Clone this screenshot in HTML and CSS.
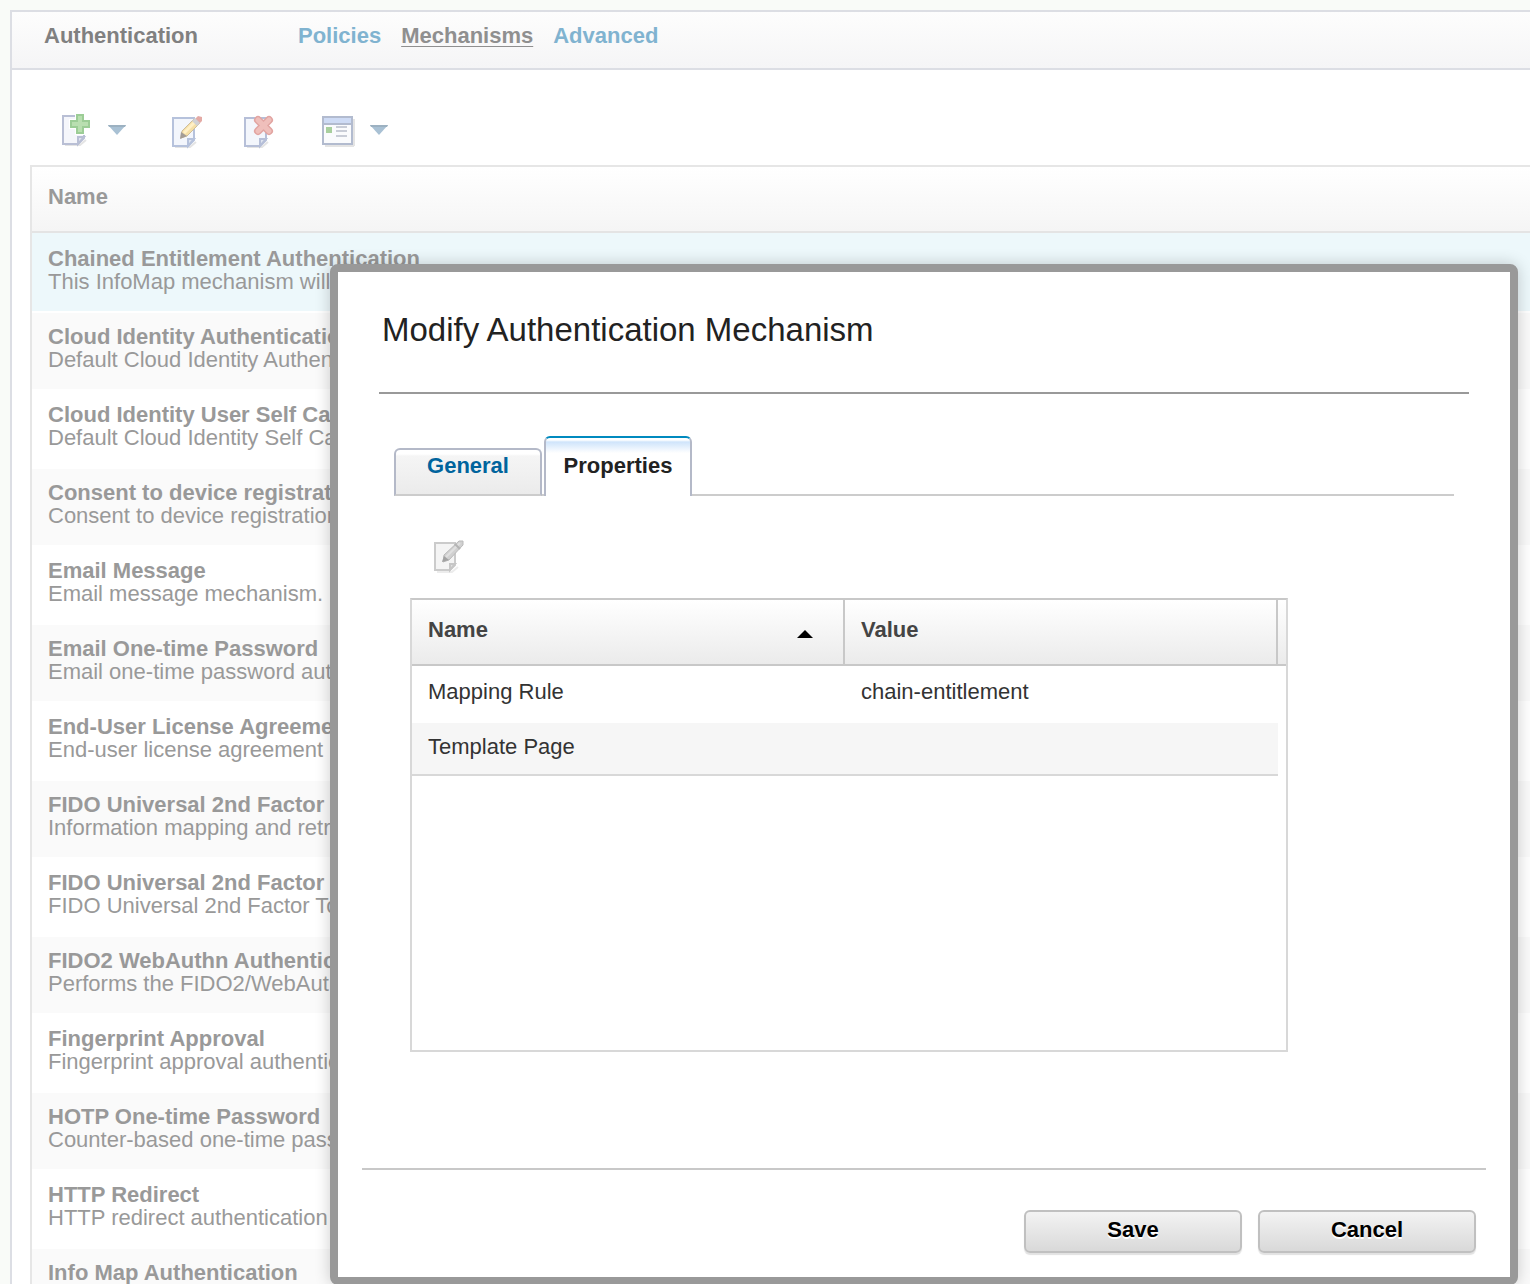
FILE: index.html
```
<!DOCTYPE html>
<html lang="en">
<head>
    <meta charset="UTF-8">
    <meta name="viewport" content="width=device-width, initial-scale=1.0">
    <title>Authentication Mechanisms</title>
    <link rel="stylesheet" href="styles.css">
</head>
<body>
    <main class="panel">
        <header class="panel-header">
            <h1>Authentication</h1>
            <nav>
                <a href="#policies">Policies</a>
                <a href="#mechanisms" class="current">Mechanisms</a>
                <a href="#advanced">Advanced</a>
            </nav>
        </header>

        <div class="toolbar">
            <button type="button" class="tool with-menu" aria-label="Add mechanism">
                <svg class="icon" viewBox="0 2 32 32">
                    <path d="M5 32H20L26 27" fill="none" stroke="#e4e4e4" stroke-width="2"/>
                    <path d="M3 3H24V25L18 31H3Z" fill="#f5f6fb" stroke="#b9bfd5" stroke-width="2"/>
                    <path d="M24 24H18V31Z" fill="#dfe3ee" stroke="#b9bfd5" stroke-width="2"/>
                    <path d="M17 2H23V8H29V14H23V20H17V14H11V8H17Z" fill="#b9dfb0" stroke="#fff" stroke-width="4"/>
                    <path d="M17 2H23V8H29V14H23V20H17V14H11V8H17Z" fill="#b9dfb0" stroke="#9ccd96" stroke-width="2"/>
                </svg>
                <svg class="arrow" viewBox="0 1 18 10"><path d="M0 0H18L9 10Z" fill="#a9c1d4"/><path d="M0 0H18L17 2H1Z" fill="#9cb1c1"/></svg>
            </button>
            <button type="button" class="tool edit" aria-label="Edit mechanism">
                <svg class="icon" viewBox="0 0 32 32">
                    <path d="M5 32H20L26 27" fill="none" stroke="#e4e4e4" stroke-width="2"/>
                    <path d="M3 3H24V25L18 31H3Z" fill="#f3f6fc" stroke="#b6c2dc" stroke-width="2"/>
                    <path d="M24 24H18V31Z" fill="#dfe5f0" stroke="#b6c2dc" stroke-width="2"/>
                    <path d="M11 23L12 16L24 4L30 8L17 21Z" fill="#f5dfa6" stroke="#cdbd9c"/>
                    <path d="M14 18L26 6" stroke="#fff0c6" stroke-width="3"/>
                    <path d="M25 4L28 1L32 2L32 6L29 9Z" fill="#e4aaa5"/>
                    <path d="M22 6L25 3L30 8L27 11Z" fill="#d1d1d4"/>
                    <path d="M10 24L11 17L17 21Z" fill="#a39c96"/>
                </svg>
            </button>
            <button type="button" class="tool delete" aria-label="Delete mechanism">
                <svg class="icon" viewBox="0 0 32 32">
                    <path d="M5 32H20L26 27" fill="none" stroke="#e4e4e4" stroke-width="2"/>
                    <path d="M3 3H24V25L18 31H3Z" fill="#f3f6fc" stroke="#b6bfd8" stroke-width="2"/>
                    <path d="M24 24H18V31Z" fill="#dfe5f0" stroke="#b6bfd8" stroke-width="2"/>
                    <path d="M16 5L27 16M27 5L16 16" stroke="#e2a5a2" stroke-width="8" stroke-linecap="round"/>
                    <path d="M16 5L27 16M27 5L16 16" stroke="#efbfbb" stroke-width="5" stroke-linecap="round"/>
                </svg>
            </button>
            <button type="button" class="tool with-menu" aria-label="View">
                <svg class="icon" viewBox="0 0 32 32">
                    <path d="M3 31H32M32 4V31" stroke="#e4e4e4" stroke-width="2"/>
                    <path d="M1 2H30V29H1Z" fill="#fafbfd" stroke="#b2bbcf" stroke-width="2"/>
                    <path d="M2 3H29V8H2Z" fill="#cedbf5"/>
                    <path d="M1 9H30" stroke="#b2bbcf" stroke-width="2"/>
                    <path d="M4 12H10V18H4Z" fill="#a8cf9e"/>
                    <path d="M14 12H25M14 16H25M14 21H25" stroke="#c9cdd7" stroke-width="2"/>
                </svg>
                <svg class="arrow" viewBox="0 1 18 10"><path d="M0 0H18L9 10Z" fill="#a9c1d4"/><path d="M0 0H18L17 2H1Z" fill="#9cb1c1"/></svg>
            </button>
        </div>

        <table class="mechanisms">
            <thead>
                <tr><th>Name</th></tr>
            </thead>
            <tbody>
                <tr class="selected"><td><strong>Chained Entitlement Authentication</strong><p>This InfoMap mechanism will</p></td></tr>
                <tr><td><strong>Cloud Identity Authentication</strong><p>Default Cloud Identity Authen</p></td></tr>
                <tr><td><strong>Cloud Identity User Self Care</strong><p>Default Cloud Identity Self Ca</p></td></tr>
                <tr><td><strong>Consent to device registration</strong><p>Consent to device registration</p></td></tr>
                <tr><td><strong>Email Message</strong><p>Email message mechanism.</p></td></tr>
                <tr><td><strong>Email One-time Password</strong><p>Email one-time password aut</p></td></tr>
                <tr><td><strong>End-User License Agreement</strong><p>End-user license agreement</p></td></tr>
                <tr><td><strong>FIDO Universal 2nd Factor</strong><p>Information mapping and retr</p></td></tr>
                <tr><td><strong>FIDO Universal 2nd Factor</strong><p>FIDO Universal 2nd Factor To</p></td></tr>
                <tr><td><strong>FIDO2 WebAuthn Authentic</strong><p>Performs the FIDO2/WebAut</p></td></tr>
                <tr><td><strong>Fingerprint Approval</strong><p>Fingerprint approval authentic</p></td></tr>
                <tr><td><strong>HOTP One-time Password</strong><p>Counter-based one-time pass</p></td></tr>
                <tr><td><strong>HTTP Redirect</strong><p>HTTP redirect authentication</p></td></tr>
                <tr><td><strong>Info Map Authentication</strong></td></tr>
            </tbody>
        </table>
    </main>

    <div class="dialog" role="dialog" aria-labelledby="dialog-title">
        <h2 id="dialog-title">Modify Authentication Mechanism</h2>

        <div class="tabs" role="tablist">
            <button type="button" class="tab" role="tab" aria-selected="false">General</button>
            <button type="button" class="tab active" role="tab" aria-selected="true">Properties</button>
        </div>

        <div class="properties" role="tabpanel">
            <button type="button" class="tool" aria-label="Edit property" disabled>
                <svg class="icon" viewBox="0 0 32 32">
                    <path d="M5 32H20L26 27" fill="none" stroke="#ececec" stroke-width="2"/>
                    <path d="M3 3H23V25L18 30H3Z" fill="#f4f4f4" stroke="#cbcbcb" stroke-width="2"/>
                    <path d="M23 24H18V30Z" fill="#e2e2e2" stroke="#c6c6c6" stroke-width="2"/>
                    <path d="M11 22L12 15L27 1H31V5L17 20Z" fill="#d0d0d0" stroke="#bababa"/>
                    <path d="M14 17L28 3" stroke="#e0e0e0" stroke-width="2"/>
                    <path d="M23 4L28 9" stroke="#b4b4b4" stroke-width="2"/>
                    <path d="M10 22L12 16L17 20Z" fill="#a2a2a2"/>
                </svg>
            </button>
            <div class="grid">
                <table>
                    <thead>
                        <tr>
                            <th class="sorted" aria-sort="ascending">
                                <span>Name</span>
                                <svg class="sort" viewBox="0 0 16 10"><path d="M8 1L16 9H0Z"/></svg>
                            </th>
                            <th>Value</th>
                            <th class="gutter"></th>
                        </tr>
                    </thead>
                    <tbody>
                        <tr><td>Mapping Rule</td><td>chain-entitlement</td></tr>
                        <tr class="odd"><td>Template Page</td><td></td></tr>
                    </tbody>
                </table>
            </div>
        </div>

        <div class="actions">
            <button type="button">Save</button>
            <button type="button">Cancel</button>
        </div>
    </div>
</body>
</html>
```
FILE: styles.css
```
* {
    box-sizing: border-box;
}
body {
    font-family: "Liberation Sans", Arial, Helvetica, sans-serif;
    font-size: 22px;
    line-height: 24px;
    margin: 0;
    padding: 10px 0 0 10px;
    height: 100vh;
    overflow: hidden;
    color: #333;
    background-color: #f9fbf8;
}
button {
    font: inherit;
    cursor: pointer;
}
table {
    width: 100%;
    border-collapse: separate;
    border-spacing: 0;
}
th {
    text-align: left;
}
.panel {
    background-color: white;
    border: 2px solid #dcdee4;
    border-right: none;
    padding-bottom: 20px;
}
.panel-header {
    display: flex;
    align-items: center;
    gap: 100px;
    height: 58px;
    padding: 0 32px 8px;
    border-bottom: 2px solid #dcdee4;
    background: linear-gradient(#fdfdfd, #f5f5f6);
}
.panel-header h1 {
    margin: 0;
    font-size: 22px;
    color: #808080;
}
.panel-header nav {
    display: flex;
    gap: 20px;
}
.panel-header a {
    font-weight: bold;
    color: #80b3d0;
    text-decoration: none;
}
.panel-header .current {
    color: #8f8f8f;
    text-decoration: underline;
    text-decoration-thickness: 1px;
    text-underline-offset: 3px;
}

/* Toolbar */
.toolbar {
    display: flex;
    align-items: center;
    height: 95px;
    padding: 26px 48px 0;
}
.tool {
    display: flex;
    align-items: center;
    gap: 16px;
    padding: 0;
    border: none;
    background: none;
}
.edit {
    margin-left: 44px;
}
.delete {
    margin: 0 48px 0 40px;
}
.icon {
    width: 32px;
    height: 32px;
    overflow: visible;
}
.arrow {
    width: 18px;
    height: 10px;
    overflow: visible;
}

/* Mechanism list */
.mechanisms {
    width: auto;
    min-width: calc(100% - 18px);
    margin-left: 18px;
    border: 2px solid #e6e6e6;
    border-right: none;
    color: #999;
    white-space: nowrap;
}
.mechanisms th {
    height: 66px;
    padding: 0 16px 4px;
    border-bottom: 2px solid #e4e4e4;
    background: linear-gradient(#fff, #f5f5f5);
}
.mechanisms td {
    height: 78px;
    padding: 12px 16px 0;
    border-top: 2px solid white;
    line-height: 23px;
    vertical-align: top;
}
.mechanisms strong {
    display: block;
}
.mechanisms p {
    margin: 0;
}
.mechanisms tr:nth-child(even) td {
    background-color: #fafafa;
}
.mechanisms .selected td {
    border-top-color: #edf8fb;
    background-color: #edf8fb;
}

/* Dialog */
.dialog {
    position: absolute;
    top: 264px;
    left: 330px;
    right: 12px;
    border: 8px solid #999;
    border-radius: 8px;
    background-color: white;
    box-shadow: 0 0 16px rgba(0, 0, 0, 0.2);
}
.dialog h2 {
    margin: 0 41px;
    padding: 38px 3px 42px;
    border-bottom: 2px solid #999;
    font-size: 33px;
    font-weight: normal;
    line-height: 40px;
    color: #222;
}
.tabs {
    display: flex;
    align-items: flex-end;
    gap: 2px;
    margin: 42px 56px 0;
    background: linear-gradient(#ccc, #ccc) bottom / 100% 2px no-repeat;
}
.tab {
    width: 148px;
    height: 48px;
    padding: 0 0 12px;
    border: 2px solid #b4b9c8;
    border-bottom-color: #ccc;
    border-radius: 6px 6px 0 0;
    background: linear-gradient(#fff 4px, #f5f5f5 6px, #ebebeb);
    font-weight: bold;
    color: #00649d;
}
.tab.active {
    height: 60px;
    padding-bottom: 2px;
    border-top-color: #008abf;
    border-bottom: none;
    background: linear-gradient(#fff 2px, #cfe4fb 4px, #fff 15px);
    color: #222;
}
.properties {
    padding: 44px 222px 116px 72px;
}
.properties .tool {
    margin-left: 22px;
}
.grid {
    height: 454px;
    margin-top: 26px;
    border: 2px solid #d8d8d8;
    border-top-color: #c8c8c8;
}
.grid table {
    table-layout: fixed;
}
.grid th {
    height: 66px;
    padding: 0 16px 4px;
    border-right: 2px solid #c8c8c8;
    border-bottom: 2px solid #c8c8c8;
    background: linear-gradient(#fff, #ebebeb);
    color: #444;
}
.grid .sorted {
    width: calc(50% - 3px);
}
.grid .gutter {
    width: 8px;
    padding: 0;
    border-right: none;
}
.sorted span {
    vertical-align: middle;
}
.sort {
    float: right;
    width: 16px;
    height: 10px;
    margin: 12px 14px 0 0;
}
.grid td {
    height: 55px;
    padding: 0 16px 4px;
    border-top: 2px solid white;
    border-bottom: 2px solid white;
}
.grid .odd td {
    border-bottom-color: #d8d8d8;
    background-color: #f6f6f6;
}
.actions {
    display: flex;
    justify-content: flex-end;
    gap: 16px;
    margin: 0 24px;
    padding: 40px 10px 24px;
    border-top: 2px solid #c8c8c8;
}
.actions button {
    width: 218px;
    height: 43px;
    padding: 0 0 4px;
    border: 2px solid #c0c0c0;
    border-radius: 6px;
    background: linear-gradient(#f3f3f3, #d9d9d9);
    box-shadow: 0 2px 1px #e2e2e2;
    font-weight: bold;
    color: black;
    text-shadow: 0 2px 0 white;
}
```
